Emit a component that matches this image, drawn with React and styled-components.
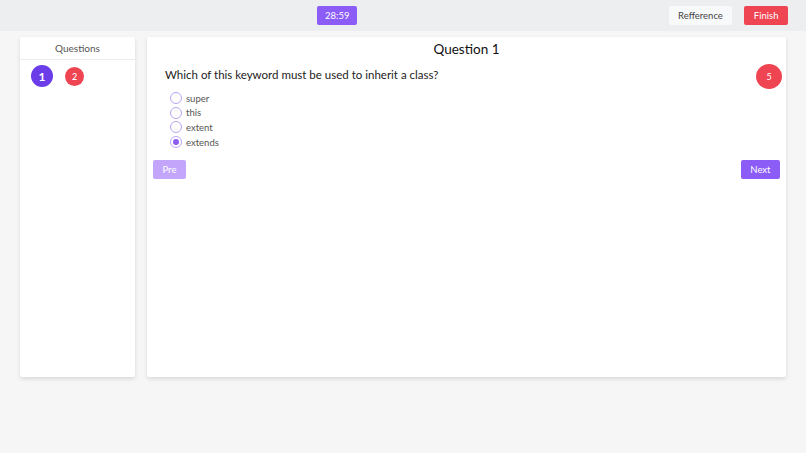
import React from "react";
import styled, { createGlobalStyle } from "styled-components";

const Global = createGlobalStyle`
  html, body { margin: 0; padding: 0; }
  body {
    background: #f6f6f6;
    font-family: Lato, "Noto Sans", sans-serif;
    color: #222;
  }
  * { box-sizing: border-box; }
`;

const Page = styled.div`
  width: 806px;
  height: 453px;
  background: #f6f6f6;
`;

const Header = styled.header`
  height: 31px;
  background: #eceef0;
  display: grid;
  grid-template-columns: 317px auto 1fr auto;
  align-items: center;
  padding-right: 18px;
`;

const Btn = styled.button`
  height: 19px;
  border: none;
  border-radius: 2px;
  padding: 0 ${(p) => p.$px || 10}px;
  font-family: inherit;
  font-size: 9.5px;
  line-height: 19px;
  color: ${(p) => p.$color || "#fff"};
  background: ${(p) => p.$bg};
  cursor: pointer;
`;

const Right = styled.div`
  display: flex;
  gap: 12px;
  grid-column: 4;
`;

const Body = styled.main`
  display: flex;
  gap: 12px;
  padding: 6px 20px 0 20px;
`;

const Panel = styled.section`
  background: #fff;
  height: 340px;
  border-radius: 2px;
  box-shadow: 0 2px 4px rgba(0, 0, 0, 0.12);
`;

const Side = styled(Panel)`
  width: 115px;
`;

const SideHead = styled.div`
  height: 23px;
  border-bottom: 1px solid #ececec;
  display: flex;
  align-items: center;
  justify-content: center;
  font-size: 10px;
  color: #555;
`;

const Nums = styled.div`
  display: flex;
  align-items: center;
  gap: 12px;
  padding: 5px 0 0 11px;
`;

const Num = styled.div`
  width: ${(p) => p.$size}px;
  height: ${(p) => p.$size}px;
  border-radius: 50%;
  background: ${(p) => p.$bg};
  color: #fff;
  display: flex;
  align-items: center;
  justify-content: center;
  font-size: ${(p) => (p.$big ? 12 : 9)}px;
  font-weight: ${(p) => (p.$big ? 700 : 500)};
`;

const Main = styled(Panel)`
  flex: 1;
  padding: 3px 6px 0 6px;
  display: flex;
  flex-direction: column;
`;

const Title = styled.h2`
  margin: 0;
  text-align: center;
  font-size: 13.5px;
  font-weight: 400;
  line-height: 18px;
  color: #111;
`;

const QRow = styled.div`
  display: flex;
  justify-content: space-between;
  align-items: flex-start;
  padding: 6px 0 0 12px;
`;

const QText = styled.p`
  margin: 4px 0 0 0;
  font-size: 11.5px;
  line-height: 14px;
  color: #222;
`;

const Score = styled.div`
  width: 26px;
  height: 25px;
  border-radius: 50%;
  background: #ef4452;
  color: #fff;
  display: flex;
  align-items: center;
  justify-content: center;
  font-size: 9px;
  margin-right: -2px;
`;

const Options = styled.div`
  display: flex;
  flex-direction: column;
  padding: 2px 0 0 17px;
`;

const Option = styled.label`
  display: flex;
  align-items: center;
  gap: 4px;
  height: 14.6px;
  font-size: 9.5px;
  color: #555;
`;

const Radio = styled.span`
  width: 12px;
  height: 12px;
  border-radius: 50%;
  border: 1px solid #b9a4f2;
  display: flex;
  align-items: center;
  justify-content: center;
  &::after {
    content: "";
    width: 6px;
    height: 6px;
    border-radius: 50%;
    background: ${(p) => (p.$on ? "#8b5cf6" : "transparent")};
  }
`;

const Nav = styled.div`
  display: flex;
  justify-content: space-between;
  padding-top: 11px;
`;

const opts = ["super", "this", "extent", "extends"];

export default function App() {
  return (
    <Page>
      <Global />
      <Header>
        <span />
        <Btn $bg="#8b5cf6" $px={8}>28:59</Btn>
        <Right>
          <Btn $bg="#f8f9fa" $color="#444" $px={9.5}>Refference</Btn>
          <Btn $bg="#ef4452" $px={9.5}>Finish</Btn>
        </Right>
      </Header>
      <Body>
        <Side>
          <SideHead>Questions</SideHead>
          <Nums>
            <Num $size={22} $bg="#6a3de8" $big>1</Num>
            <Num $size={19} $bg="#ef4452">2</Num>
          </Nums>
        </Side>
        <Main>
          <Title>Question 1</Title>
          <QRow>
            <QText>Which of this keyword must be used to inherit a class?</QText>
            <Score>5</Score>
          </QRow>
          <Options>
            {opts.map((o, i) => (
              <Option key={o}>
                <Radio $on={i === 3} />
                {o}
              </Option>
            ))}
          </Options>
          <Nav>
            <Btn $bg="#c3a6fb" $px={9.5}>Pre</Btn>
            <Btn $bg="#8b5cf6" $px={9.5}>Next</Btn>
          </Nav>
        </Main>
      </Body>
    </Page>
  );
}
